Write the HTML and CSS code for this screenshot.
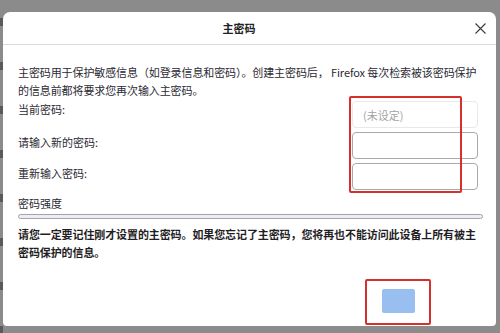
FILE: index.html
```html
<!DOCTYPE html>
<html lang="zh-CN">
<head>
<meta charset="UTF-8">
<meta name="viewport" content="width=device-width, initial-scale=1.0">
<title>主密码</title>
<link rel="stylesheet" href="styles.css">
</head>
<body>
<div class="behind"></div>
<div class="dialog">
    <div class="dialog-header">
        <div class="dialog-title">主密码</div>
        <button class="close-btn" aria-label="关闭">
            <svg width="11" height="11" viewBox="0 0 11 11"><path d="M0.5 0.5 L10.5 10.5 M10.5 0.5 L0.5 10.5" stroke="#3a3a3a" stroke-width="1.1" fill="none"/></svg>
        </button>
    </div>
    <div class="dialog-body">
        <p class="intro">主密码用于保护敏感信息（如登录信息和密码）。创建主密码后， Firefox 每次检索被该密码保护的信息前都将要求您再次输入主密码。</p>
        <div class="fields">
            <div class="field first">
                <label for="oldpw">当前密码:</label>
                <input type="password" id="oldpw" placeholder="(未设定)" disabled>
            </div>
            <div class="field">
                <label for="pw1">请输入新的密码:</label>
                <input type="password" id="pw1">
            </div>
            <div class="field">
                <label for="pw2">重新输入密码:</label>
                <input type="password" id="pw2">
            </div>
        </div>
        <div class="strength-label">密码强度</div>
        <div class="strength-bar"><div class="strength-fill"></div></div>
        <p class="warning">请您一定要记住刚才设置的主密码。如果您忘记了主密码，您将再也不能访问此设备上所有被主密码保护的信息。</p>
        <div class="dialog-footer">
            <button class="ok-btn"></button>
        </div>
    </div>
    <div class="mark mark-inputs"></div>
    <div class="mark mark-button"></div>
</div>
</body>
</html>
```
FILE: styles.css
```css
body {
    margin: 0;
    height: 333px;
    overflow: hidden;
    background: #8b8b8b;
    display: flex;
    font-family: "Noto Sans CJK SC", "Noto Sans", sans-serif;
    font-size: 11px;
    color: #2b2a33;
}
.behind {
    width: 3px;
    background: repeating-linear-gradient(to bottom, #8b8b8b 0 18px, #5a5a5a 18px 26px, #8b8b8b 26px 44px);
}
.dialog {
    position: relative;
    width: 493px;
    height: 314px;
    margin-top: 12px;
    background: #fff;
    border-radius: 7px 7px 4px 4px;
}
.dialog-header {
    height: 32px;
    display: flex;
    align-items: center;
    padding-right: 10px;
    border-bottom: 1px solid #dcdcdc;
}
.dialog-title {
    flex: 1;
    text-align: center;
    font-weight: bold;
    color: #222;
}
.close-btn {
    width: 11px;
    height: 11px;
    padding: 0;
    border: none;
    background: none;
    display: flex;
}
.dialog-body {
    padding: 18px 18px 0 15px;
}
p {
    margin: 0;
    line-height: 18px;
    letter-spacing: -0.1px;
}
.fields {
    display: flex;
    flex-direction: column;
    gap: 4px;
    margin-top: 2px;
}
.field {
    display: flex;
    justify-content: space-between;
    align-items: flex-start;
}
.field label {
    line-height: 18px;
    margin-top: 1px;
}
.field.first label {
    margin-top: -1px;
}
.field input {
    box-sizing: border-box;
    width: 126px;
    height: 27px;
    padding: 0 10px;
    border: 1px solid #a9a9a9;
    border-radius: 4px;
    font: inherit;
    background: #fff;
}
.field input:disabled {
    border-color: #e8e8e8;
}
.field input::placeholder {
    color: #a3a3a3;
}
.strength-label {
    margin-top: 4px;
    line-height: 18px;
}
.strength-bar {
    margin: 2px -5px 0 0;
    height: 5px;
    box-sizing: border-box;
    border: 1px solid #a3a3ab;
    border-radius: 3px;
    background: #eceef2;
}
.warning {
    margin-top: 6px;
    font-weight: bold;
    color: #1f1e25;
}
.dialog-footer {
    display: flex;
    justify-content: flex-end;
    margin-top: 28px;
    padding-right: 63px;
}
.ok-btn {
    width: 33px;
    height: 24px;
    border: none;
    border-radius: 2px;
    background: #98bff0;
}
.mark {
    position: absolute;
    box-sizing: border-box;
    border: 2.5px solid #d5302d;
    border-radius: 2px;
}
.mark-inputs {
    left: 346px;
    top: 84px;
    width: 113px;
    height: 97px;
}
.mark-button {
    left: 362px;
    top: 267px;
    width: 66px;
    height: 46px;
}
```
